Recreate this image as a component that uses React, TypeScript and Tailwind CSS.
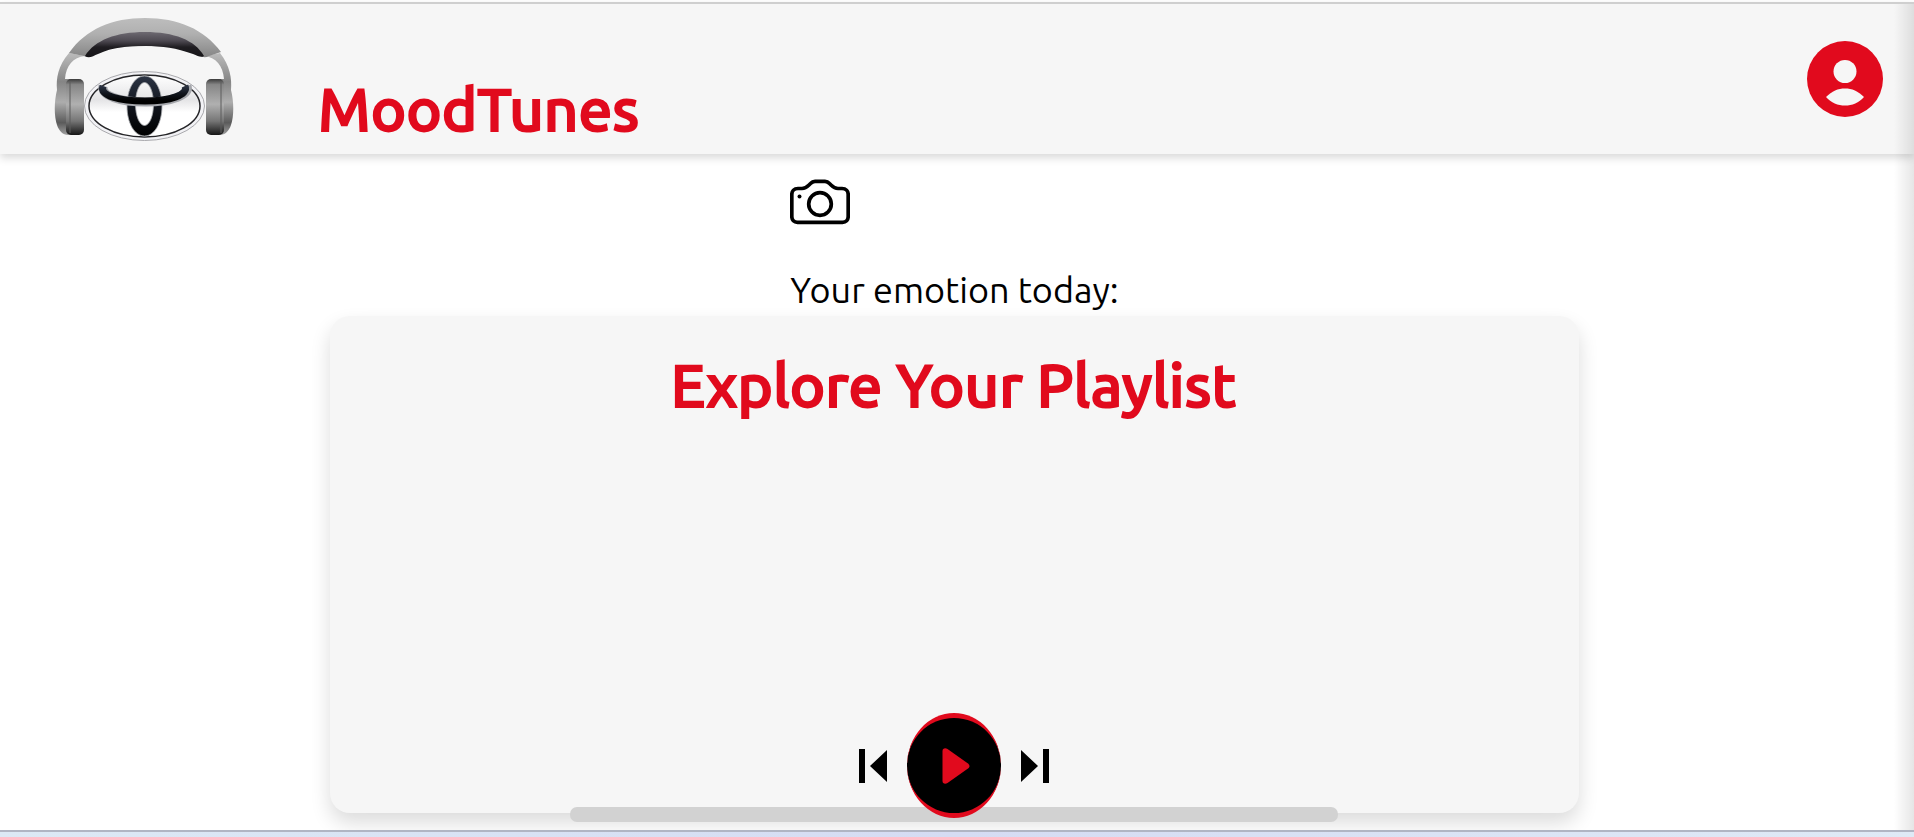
import type { ReactNode } from "react"

function Logo() {
  return (
    <svg viewBox="0 0 180 124" className="h-[124px] w-[180px]" role="img" aria-label="MoodTunes logo">
      <defs>
        <linearGradient id="band" x1="0" x2="0" y1="0" y2="1">
          <stop offset="0" stopColor="#bdbdbd" />
          <stop offset="0.4" stopColor="#b0b0b0" />
          <stop offset="1" stopColor="#858585" />
        </linearGradient>
        <linearGradient id="pad" x1="0" x2="0" y1="0" y2="1">
          <stop offset="0" stopColor="#6d6971" />
          <stop offset="0.35" stopColor="#4d4951" />
          <stop offset="0.6" stopColor="#1f1d21" />
          <stop offset="1" stopColor="#161518" />
        </linearGradient>
        <linearGradient id="cup" x1="0" x2="0" y1="0" y2="1">
          <stop offset="0" stopColor="#3a3a3a" />
          <stop offset="0.1" stopColor="#868686" />
          <stop offset="0.45" stopColor="#b0b0b0" />
          <stop offset="0.75" stopColor="#767676" />
          <stop offset="1" stopColor="#161616" />
        </linearGradient>
        <linearGradient id="shell" x1="0" x2="0" y1="0" y2="1">
          <stop offset="0" stopColor="#bcbcbc" />
          <stop offset="0.35" stopColor="#858585" />
          <stop offset="0.6" stopColor="#adadad" />
          <stop offset="0.85" stopColor="#5b5b5b" />
          <stop offset="1" stopColor="#a0a0a0" />
        </linearGradient>
        <linearGradient id="face" x1="0" x2="0" y1="0" y2="1">
          <stop offset="0" stopColor="#ffffff" />
          <stop offset="0.4" stopColor="#e4e4e6" />
          <stop offset="0.6" stopColor="#ffffff" />
          <stop offset="1" stopColor="#ffffff" />
        </linearGradient>
        <linearGradient id="ring" x1="0" x2="0" y1="0" y2="1">
          <stop offset="0" stopColor="#2c3444" />
          <stop offset="0.5" stopColor="#11151d" />
          <stop offset="1" stopColor="#000000" />
        </linearGradient>
      </defs>
      <path d="M15 35C4 48 2 60 3 72C0 84 0 98 3 107C5 113 9 117 14 117H17V61H11C12 48 19 39 31 38Z" fill="url(#shell)" />
      <path d="M166 35C176 48 178 60 177 72C180 84 180 98 177 107C175 113 171 117 166 117H163V61H170C169 48 162 39 150 38Z" fill="url(#shell)" />
      <rect x="12" y="61" width="18" height="56" rx="5" fill="url(#cup)" />
      <path d="M16 63V115" stroke="#5c5c5c" strokeWidth="1" />
      <rect x="152" y="61" width="18" height="56" rx="5" fill="url(#cup)" />
      <path d="M167 63V115" stroke="#5c5c5c" strokeWidth="1" />
      <path d="M15 35C32 11 58 0 91 0S150 11 167 34L155 38Q150 41 145 37C125 25 60 25 36 37Q33 40 30 38Z" fill="url(#band)" />
      <path d="M31 38C41 22 62 14 91 14S141 22 150 38C147 40 144 38 139 36C122 30 109 28 91 28S59 29 44 36C39 38 35 41 31 38Z" fill="url(#pad)" />
      <ellipse cx="90.500" cy="88" rx="60" ry="34.500" fill="#f2f2f5" stroke="#a9a9ad" />
      <ellipse cx="90.500" cy="88" rx="55.500" ry="31" fill="url(#face)" stroke="#252528" strokeWidth="1.500" />
      <path
        d="M90.500 58C100.500 58 108 71 108 88S100.500 118 90.500 118S73 105 73 88S80.500 58 90.500 58ZM90.500 64.500C85.500 64.500 81.500 74 81.500 86S85.500 107.500 90.500 107.500S99.500 98 99.500 86S95.500 64.500 90.500 64.500Z"
        fill="url(#ring)"
        fillRule="evenodd"
        stroke="#a7a9ad"
        strokeWidth="0.800"
      />
      <path d="M49 68C47 78 66 84 92 84S136 77 133 68" fill="none" stroke="#a4a6ab" strokeWidth="9" />
      <path d="M49 68C45 78 66 83 91 83S135 77 131 68" fill="none" stroke="url(#ring)" strokeWidth="7" />
    </svg>
  )
}

function CameraIcon() {
  return (
    <svg viewBox="0 0 60 46" className="h-[46px] w-[60px]" fill="none" stroke="black" strokeWidth="3.700">
      <path d="M8 9.500H12C15 9.500 17 8 19 6L20.500 4.500C22 2.800 23.500 2.300 25 2.300H35C36.500 2.300 38 2.800 39.500 4.500L41 6C43 8 45 9.500 48 9.500H52C56 9.500 58.200 12 58.200 15.500V37.500C58.200 41 56 43.300 52.500 43.300H7.500C4 43.300 1.800 41 1.800 37.500V15.500C1.800 12 4 9.500 8 9.500Z" />
      <circle cx="30" cy="25" r="11.300" />
      <circle cx="9.500" cy="17.500" r="2" fill="black" stroke="none" />
    </svg>
  )
}

function UserIcon() {
  return (
    <svg viewBox="0 0 76 76" className="size-[76px]">
      <circle cx="38" cy="38" r="38" fill="#e10a1d" />
      <circle cx="38" cy="30.500" r="11.500" fill="#f6f6f6" />
      <path d="M19 56C25 50 31 47.500 38 47.500S51 50 57 56C52 62 45 64.500 38 64.500S24 62 19 56Z" fill="#f6f6f6" />
    </svg>
  )
}

function SkipButton({ label, children }: { label: string; children: ReactNode }) {
  return (
    <button type="button" aria-label={label}>
      <svg viewBox="0 0 30 34" className="h-[34px] w-[30px]" fill="black">
        {children}
      </svg>
    </button>
  )
}

export default function App() {
  return (
    <div className="relative flex min-h-screen flex-col overflow-hidden bg-white font-['Ubuntu','Noto_Sans',sans-serif] text-black">
      <header className="z-10 mt-[2px] flex items-start justify-between border-t-2 border-[#cfcfcf] bg-[#f6f6f6] pr-[31px] pl-[54px] shadow-[0_4px_8px_rgba(0,0,0,0.15)]">
        <div className="flex h-[150px] items-end gap-[84px] pb-3">
          <Logo />
          <h1 className="text-6xl leading-[66px] font-medium text-[#e10a1d] [-webkit-text-stroke:2px_#e10a1d]">MoodTunes</h1>
        </div>
        <button type="button" aria-label="Profile" className="mt-[37px]">
          <UserIcon />
        </button>
      </header>

      <main className="flex flex-1 flex-col items-center pr-[5px]">
        <div className="flex flex-col items-start pt-[25px]">
          <button type="button" aria-label="Take a photo">
            <CameraIcon />
          </button>
          <p className="mt-10 pb-px text-4xl leading-[50px]">Your emotion today:</p>
        </div>

        <section className="flex w-full max-w-[1249px] flex-1 flex-col items-center rounded-[20px] bg-[#f6f6f6] pt-9 pr-0.5 shadow-[0_10px_20px_rgba(0,0,0,0.14)]">
          <h2 className="text-6xl leading-[66px] font-medium text-[#e10a1d] [-webkit-text-stroke:2px_#e10a1d]">Explore Your Playlist</h2>
          <div className="relative mt-auto -mb-[5px] flex items-center gap-[19px]">
            <SkipButton label="Previous">
              <path d="M1 0H7V34H1ZM29 1V33L12 17Z" />
            </SkipButton>
            <button
              type="button"
              aria-label="Play"
              className="z-10 flex h-[105px] w-[94px] items-center justify-center rounded-[50%] border-y-[5px] border-[#e10a1d] bg-black pl-1"
            >
              <svg viewBox="0 0 28 36" className="h-9 w-7" fill="#e10a1d">
                <path d="M0.500 3C0.500 0.500 3 -0.500 5.500 1L26 15.500C28 17 28 19 26 20.500L5.500 35C3 36.500 0.500 35.500 0.500 33Z" />
              </svg>
            </button>
            <SkipButton label="Next">
              <path d="M1 1V33L18 17ZM23 0H29V34H23Z" />
            </SkipButton>
          </div>
          <div className="-mt-[6px] -mb-[9px] h-[15px] w-[768px] rounded-[7px] bg-[#d2d2d2]" />
        </section>
      </main>

      <div className="z-10 mt-[17px] h-[7px] border-t-2 border-[#b0b5c3] bg-linear-to-r from-[#dce9f5] via-[#d5dcf3] to-[#dfeaf6]" />
      <div className="pointer-events-none absolute top-1 right-0 bottom-[7px] z-20 w-5 bg-linear-to-r from-transparent to-black/10" />
    </div>
  )
}
